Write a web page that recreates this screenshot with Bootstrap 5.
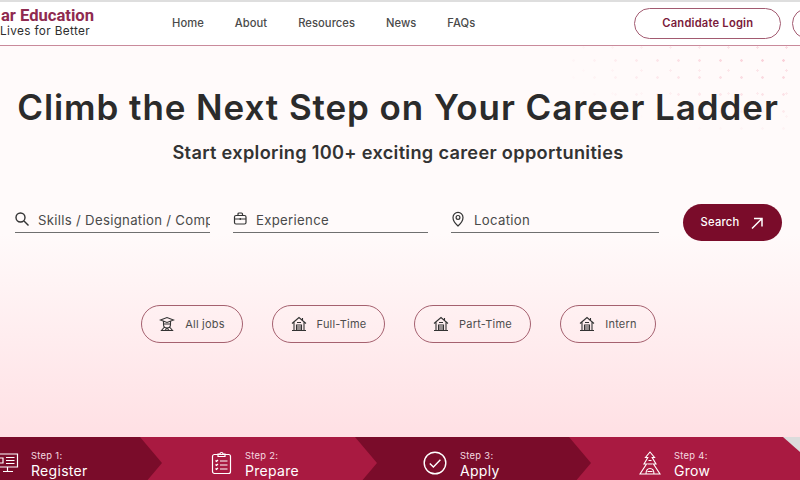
<!DOCTYPE html>
<html lang="en">
<head>
  <meta charset="UTF-8">
  <meta name="viewport" content="width=device-width, initial-scale=1.0">
  <title>Careers</title>
  <link href="https://cdn.jsdelivr.net/npm/bootstrap@5.3.3/dist/css/bootstrap.min.css" rel="stylesheet">
  <script src="https://cdn.jsdelivr.net/npm/bootstrap@5.3.3/dist/js/bootstrap.bundle.min.js"></script>
  <style>
    html, body {
      height: 480px;
      overflow: hidden;
    }
    body {
      font-family: "Inter", "Liberation Sans", sans-serif;
      color: #333;
      background: #fff;
    }
    .page-top {
      height: 46px;
      padding: 0;
      background: #fff;
      border-top: 2px solid #dedede;
      border-bottom: 1px solid #c98a9b;
      flex-wrap: nowrap;
      justify-content: flex-start;
      white-space: nowrap;
    }
    .brand-box {
      width: 94px;
      flex: none;
      overflow: hidden;
      margin-top: -4px;
    }
    .brand-name {
      font: 700 16.6px/19px "Roboto", sans-serif;
      color: #8f2a50;
    }
    .brand-tag {
      font-size: 11.8px;
      line-height: 13px;
      letter-spacing: .35px;
      color: #2e2e2e;
    }
    .top-links {
      margin-left: 78px;
      gap: 31px;
    }
    .top-links .nav-link {
      padding: 0;
      font-size: 11.2px;
      font-weight: 500;
      letter-spacing: .05px;
      color: #4a4a4a;
    }
    .login-btn {
      flex: none;
      height: 31px;
      width: 147px;
      margin-left: 159px;
      padding: 0;
      border: 1px solid #a25a70;
      border-radius: 16px;
      font-size: 11.2px;
      font-weight: 600;
      letter-spacing: .2px;
      color: #7a1a3a;
      background: #fff;
    }
    .login-btn-next {
      margin-left: 11px;
      width: 60px;
    }
    .hero-area {
      height: 391px;
      position: relative;
      background: linear-gradient(180deg, #fffafa 0%, #fffafa 48%, #ffe0e4 100%);
    }
    .hero-area::before {
      content: "";
      position: absolute;
      top: 0;
      right: 0;
      width: 240px;
      height: 90px;
      background-image: radial-gradient(circle, #f9c9d3 1.1px, transparent 1.5px), radial-gradient(circle, #fbdbe1 1px, transparent 1.4px);
      background-size: 21px 17px, 29px 23px;
      background-position: 3px 6px, 9px 13px;
      -webkit-mask-image: radial-gradient(ellipse at 100% 0%, #000 0%, transparent 75%);
      mask-image: radial-gradient(ellipse at 100% 0%, #000 0%, transparent 75%);
    }
    .hero-inner {
      position: relative;
      padding-top: 40px;
    }
    .hero-title {
      font-size: 35px;
      line-height: 42px;
      font-weight: 600;
      letter-spacing: .92px;
      color: #2b2b2b;
      margin: 0 0 0 -4px;
      white-space: nowrap;
    }
    .hero-sub {
      font-size: 18.2px;
      line-height: 24px;
      font-weight: 600;
      letter-spacing: .3px;
      color: #333;
      margin: 12px 0 0 -4px;
    }
    .search-row {
      margin-top: 40px;
      padding-left: 15px;
      gap: 23px;
    }
    .search-field {
      height: 24px;
      margin-bottom: 4px;
      border-bottom: 1px solid #6f6f6f;
      gap: 7px;
      color: #444;
    }
    .field-a { width: 195px; gap: 9px; }
    .field-b { width: 195px; }
    .field-c { width: 208px; }
    .search-field svg {
      flex: none;
      margin-bottom: 3px;
    }
    .search-field .form-control {
      border: 0;
      border-radius: 0;
      background: transparent;
      padding: 1px 0 0;
      font-size: 13.2px;
      letter-spacing: .3px;
      box-shadow: none;
      min-width: 0;
    }
    .search-field .form-control::placeholder {
      color: #4a4a4a;
      opacity: 1;
    }
    .search-btn {
      width: 99px;
      height: 37px;
      padding: 0;
      margin-left: 1px;
      border: 0;
      border-radius: 19px;
      background: #7a0c2a;
      color: #fff;
      font-size: 11.2px;
      font-weight: 500;
      letter-spacing: .2px;
      gap: 11px;
    }
    .pill-row {
      margin-top: 64px;
      padding-left: 141px;
      gap: 29px;
    }
    .type-pill {
      height: 38px;
      padding: 0;
      border: 1px solid #a5616f;
      border-radius: 19px;
      background: transparent;
      color: #4d4d4d;
      font-size: 11px;
      letter-spacing: .2px;
      gap: 10px;
    }
    .pill-all { width: 102px; }
    .pill-full { width: 113px; }
    .pill-part { width: 117px; }
    .pill-intern { width: 96px; }
    .step-bar {
      height: 52px;
      position: relative;
      background: #a91a41;
      color: #fff;
    }
    .step-bar::after {
      content: "";
      position: absolute;
      top: 0;
      right: 0;
      z-index: 5;
      border-style: solid;
      border-width: 0 17px 15px 0;
      border-color: transparent #dcdcdc transparent transparent;
    }
    .step-item {
      flex: none;
      height: 52px;
      margin-right: -22px;
      padding-left: 72px;
      gap: 13px;
      clip-path: polygon(0 0, calc(100% - 22px) 0, 100% 50%, calc(100% - 22px) 100%, 0 100%);
    }
    .step-one { width: 162px; padding-left: 0; background: #7a0c2a; z-index: 4; gap: 12px; }
    .step-two { width: 237px; padding-left: 73px; background: #a91a41; z-index: 3; }
    .step-three { width: 236px; padding-left: 70px; background: #7a0c2a; z-index: 2; }
    .step-four { width: 240px; background: #a91a41; z-index: 1; clip-path: none; }
    .step-item svg {
      flex: none;
      margin-left: -2px;
    }
    .step-text {
      padding-top: 3px;
    }
    .step-small {
      font-size: 9.4px;
      line-height: 12px;
      letter-spacing: .3px;
      color: #f5dbe2;
    }
    .step-big {
      font-size: 14px;
      line-height: 18px;
      letter-spacing: .3px;
    }
  </style>
</head>
<body>
  <nav class="navbar page-top">
    <div class="brand-box text-end">
      <div class="brand-name">ar Education</div>
      <div class="brand-tag pe-1">Lives for Better</div>
    </div>
    <ul class="navbar-nav flex-row top-links">
      <li class="nav-item"><a class="nav-link" href="#">Home</a></li>
      <li class="nav-item"><a class="nav-link" href="#">About</a></li>
      <li class="nav-item"><a class="nav-link" href="#">Resources</a></li>
      <li class="nav-item"><a class="nav-link" href="#">News</a></li>
      <li class="nav-item"><a class="nav-link" href="#">FAQs</a></li>
    </ul>
    <button class="btn login-btn" type="button">Candidate Login</button>
    <button class="btn login-btn login-btn-next" type="button"></button>
  </nav>

  <section class="hero-area">
    <div class="hero-inner">
      <h1 class="hero-title text-center">Climb the Next Step on Your Career Ladder</h1>
      <p class="hero-sub text-center">Start exploring 100+ exciting career opportunities</p>

      <form class="d-flex align-items-center search-row">
        <label class="d-flex align-items-center search-field field-a">
          <svg width="14" height="14" viewBox="1 1 14 14" fill="none" stroke="#333" stroke-width="1.4"><circle cx="6.5" cy="6.5" r="4.5"/><path d="M10 10l4.5 4.5"/></svg>
          <input class="form-control" type="text" placeholder="Skills / Designation / Company">
        </label>
        <label class="d-flex align-items-center search-field field-b">
          <svg width="16" height="16" viewBox="0 0 16 16" fill="none" stroke="#333" stroke-width="1.2"><rect x="1.500" y="4.500" width="11.500" height="8.500" rx="1.500"/><path d="M5 4.500V3a1 1 0 0 1 1-1h2.500a1 1 0 0 1 1 1v1.500M1.500 8h11.500M7.250 7v2"/></svg>
          <input class="form-control" type="text" placeholder="Experience">
        </label>
        <label class="d-flex align-items-center search-field field-c">
          <svg width="16" height="16" viewBox="0 0 16 16" fill="none" stroke="#333" stroke-width="1.2"><path d="M7 15s-5-4.600-5-8.600a5 5 0 0 1 10 0C12 10.400 7 15 7 15z"/><circle cx="7" cy="6.400" r="1.900"/></svg>
          <input class="form-control" type="text" placeholder="Location">
        </label>
        <button class="btn d-flex align-items-center justify-content-center search-btn" type="button">
          Search
          <svg width="14" height="14" viewBox="0 0 14 14" fill="none" stroke="#fff" stroke-width="1.5"><path d="M2 12.500L12 2.500M4 2.500h8v8"/></svg>
        </button>
      </form>

      <div class="d-flex pill-row">
        <button class="btn d-flex align-items-center justify-content-center type-pill pill-all" type="button">
          <svg width="16" height="16" viewBox="0 0 16 16" fill="none" stroke="#333" stroke-width="1.1"><path d="M1.500 4L8 1.500 14.500 4 8 6.500zM4.500 5.500v3a3.500 3.500 0 0 0 7 0v-3M4.500 8h7M5 11.500l-2.500 3h11l-2.500-3M6 14.500L8 12l2 2.500"/></svg>
          All jobs
        </button>
        <button class="btn d-flex align-items-center justify-content-center type-pill pill-full" type="button">
          <svg width="16" height="16" viewBox="0 0 16 16" fill="none" stroke="#333" stroke-width="1.1"><path d="M1 7.500L8 1.500l7 6M3 6V14.500h10V6M1 14.500h14M5.500 14.500V9h5v5.500M5.500 11h5M5.500 13h5M6 6.500h4M11.500 2v2.500"/></svg>
          Full-Time
        </button>
        <button class="btn d-flex align-items-center justify-content-center type-pill pill-part" type="button">
          <svg width="16" height="16" viewBox="0 0 16 16" fill="none" stroke="#333" stroke-width="1.1"><path d="M1 7.500L8 1.500l7 6M3 6V14.500h10V6M1 14.500h14M5.500 14.500V9h5v5.500M5.500 11h5M5.500 13h5M6 6.500h4M11.500 2v2.500"/></svg>
          Part-Time
        </button>
        <button class="btn d-flex align-items-center justify-content-center type-pill pill-intern" type="button">
          <svg width="16" height="16" viewBox="0 0 16 16" fill="none" stroke="#333" stroke-width="1.1"><path d="M1 7.500L8 1.500l7 6M3 6V14.500h10V6M1 14.500h14M5.500 14.500V9h5v5.500M5.500 11h5M5.500 13h5M6 6.500h4M11.500 2v2.500"/></svg>
          Intern
        </button>
      </div>
    </div>
  </section>

  <section class="d-flex step-bar">
    <div class="d-flex align-items-center position-relative step-item step-one">
      <svg width="21" height="22" viewBox="0 0 21 22" fill="none" stroke="#fff" stroke-width="1.200"><path d="M0 2h19.500v13H0M9.500 15v4M5 19.500h10M.5 6h4.500v5H.5M8 5.500h8.500M8 8.500h8.500M8 11.500h8.500"/></svg>
      <div class="step-text"><div class="step-small">Step 1:</div><div class="step-big">Register</div></div>
    </div>
    <div class="d-flex align-items-center position-relative step-item step-two">
      <svg width="21" height="24" viewBox="0 0 21 24" fill="none" stroke="#fff" stroke-width="1.200"><rect x="1.500" y="3.500" width="18" height="19" rx="2"/><path d="M7 5.500V3h2a1.500 1.500 0 0 1 3 0h2v2.500zM4.500 9.500l1 1 1.500-1.500M9 10h7.500M4.500 13.500l1 1 1.500-1.500M9 14h7.500M4.500 17.500l1 1 1.500-1.500M9 18h7.500"/></svg>
      <div class="step-text"><div class="step-small">Step 2:</div><div class="step-big">Prepare</div></div>
    </div>
    <div class="d-flex align-items-center position-relative step-item step-three">
      <svg width="24" height="24" viewBox="0 0 24 24" fill="none" stroke="#fff" stroke-width="1.400"><circle cx="12" cy="12" r="10.800"/><path d="M6.800 12.500l3.600 3.600 7-7.400"/></svg>
      <div class="step-text"><div class="step-small">Step 3:</div><div class="step-big">Apply</div></div>
    </div>
    <div class="d-flex align-items-center position-relative step-item step-four">
      <svg width="22" height="24" viewBox="0 0 22 24" fill="none" stroke="#fff" stroke-width="1.100"><path d="M11 1L6.500 6.500h2.300L5 13h2.500L1 23h20l-6.500-10H17l-3.800-6.500h2.300zM7 23c0-3 1.500-5.500 4-5.500s4 2.500 4 5.500M8.500 13h5M9.500 9.500h3M8.500 20.500h5"/></svg>
      <div class="step-text"><div class="step-small">Step 4:</div><div class="step-big">Grow</div></div>
    </div>
  </section>
</body>
</html>
